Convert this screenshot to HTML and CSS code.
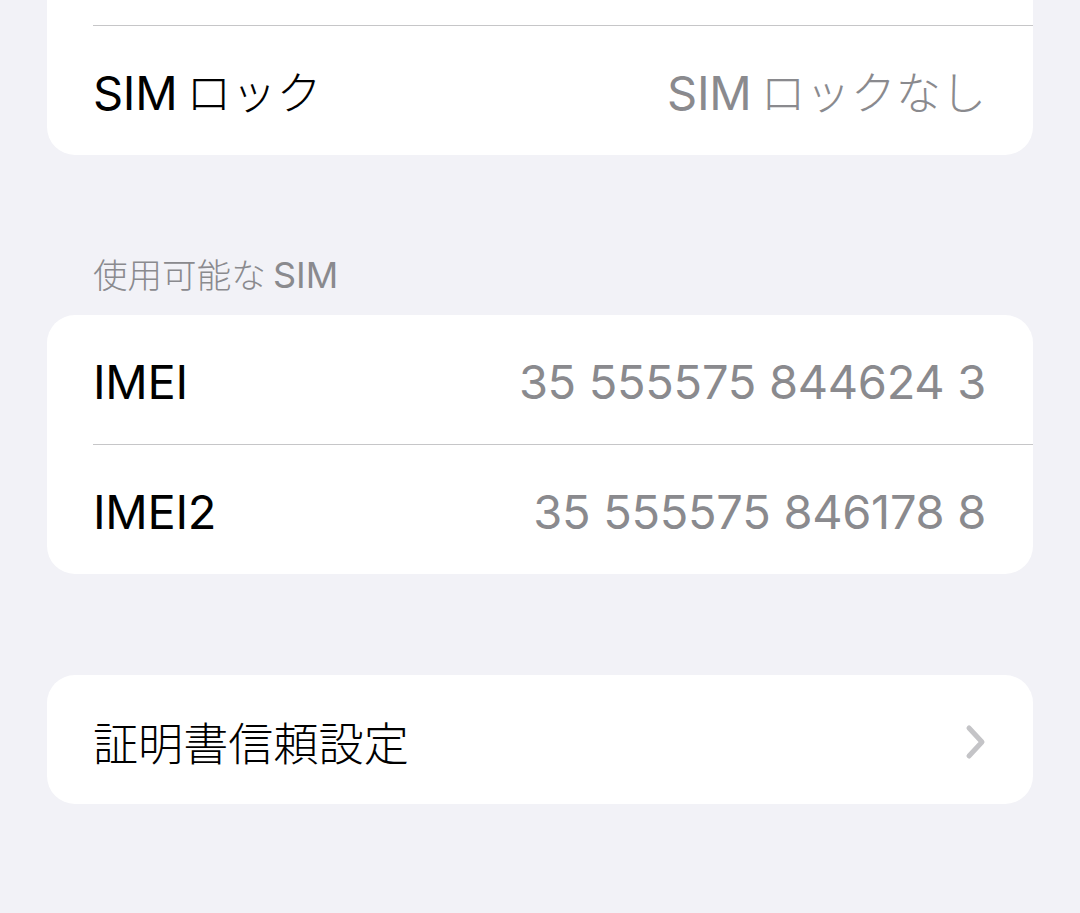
FILE: index.html
```html
<!DOCTYPE html>
<html lang="ja">
<head>
    <meta charset="UTF-8">
    <meta name="viewport" content="width=device-width, initial-scale=1.0">
    <title>情報</title>
    <link rel="stylesheet" href="styles.css">
</head>
<body>
    <div class="page">
        <div class="card card-top">
            <div class="row"></div>
            <div class="sep"></div>
            <div class="row">
                <span class="label">SIM<span class="ja after-latin">ロック</span></span>
                <span class="value">SIM<span class="ja after-latin">ロックなし</span></span>
            </div>
        </div>

        <h2 class="section-title"><span class="ja">使用可能な</span><span class="latin-after-ja">SIM</span></h2>
        <div class="card">
            <div class="row">
                <span class="label">IMEI</span>
                <span class="value">35 555575 844624 3</span>
            </div>
            <div class="sep"></div>
            <div class="row">
                <span class="label">IMEI2</span>
                <span class="value">35 555575 846178 8</span>
            </div>
        </div>

        <div class="card card-link">
            <div class="row">
                <span class="label ja">証明書信頼設定</span>
                <svg class="chevron" width="22" height="36" viewBox="0 0 22 36">
                    <path d="M4 4 L17 18 L4 32" fill="none" stroke="#c4c4c7" stroke-width="5" stroke-linecap="round" stroke-linejoin="round"/>
                </svg>
            </div>
        </div>
    </div>
</body>
</html>
```

FILE: styles.css
```css
* {
    box-sizing: border-box;
}

html, body {
    margin: 0;
    padding: 0;
}

body {
    font-family: "Inter", "Noto Sans CJK JP", sans-serif;
    background-color: #f2f2f7;
    height: 913px;
    overflow: hidden;
}

.page {
    padding: 0 47px;
}

.card {
    background: #fff;
    border-radius: 28px;
    overflow: hidden;
}

.card-top {
    margin-top: -104px;
}

.card-link {
    margin-top: 101px;
}

.row {
    display: flex;
    align-items: center;
    justify-content: space-between;
    height: 129px;
    padding: 5px 47px 0 46px;
    font-size: 47px;
    line-height: 1.2;
    letter-spacing: -0.3px;
}

.label {
    color: #000;
}

.value {
    color: #8a8a8e;
}

/* japanese runs are a bit smaller and lighter than the latin ones */
.ja {
    font-family: "Noto Sans CJK JP", sans-serif;
    font-size: 0.96em;
    font-weight: 300;
    letter-spacing: 0;
}

.after-latin {
    margin-left: 0.2em;
}

.latin-after-ja {
    margin-left: 0.2em;
}

.sep {
    height: 1px;
    margin-left: 46px;
    background: #c6c6c8;
}

.section-title {
    height: 40px;
    margin: 98px 0 22px 46px;
    font-size: 36px;
    font-weight: normal;
    line-height: 40px;
    color: #8a8a8e;
}

.chevron {
    display: block;
    margin-right: -1px;
}
```
